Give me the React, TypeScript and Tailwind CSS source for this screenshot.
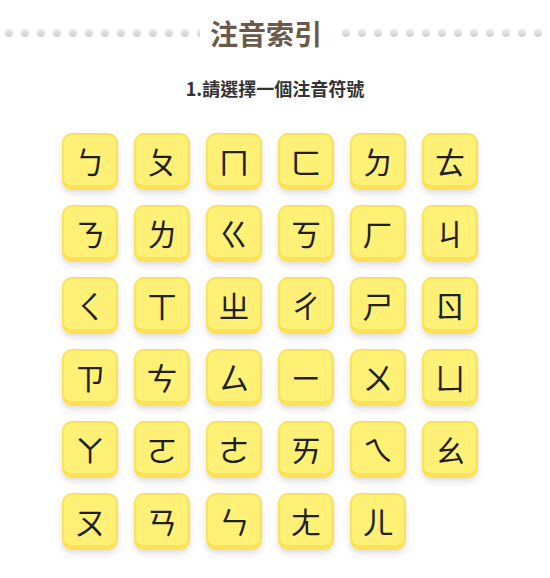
import React from 'react';

const symbols = [
  'ㄅ', 'ㄆ', 'ㄇ', 'ㄈ', 'ㄉ', 'ㄊ',
  'ㄋ', 'ㄌ', 'ㄍ', 'ㄎ', 'ㄏ', 'ㄐ',
  'ㄑ', 'ㄒ', 'ㄓ', 'ㄔ', 'ㄕ', 'ㄖ',
  'ㄗ', 'ㄘ', 'ㄙ', 'ㄧ', 'ㄨ', 'ㄩ',
  'ㄚ', 'ㄛ', 'ㄜ', 'ㄞ', 'ㄟ', 'ㄠ',
  'ㄡ', 'ㄢ', 'ㄣ', 'ㄤ', 'ㄦ',
];

function Dots({ count }: { count: number }) {
  return (
    <div className="flex items-center gap-2 overflow-hidden">
      {Array.from({ length: count }).map((_, i) => (
        <span
          key={i}
          className="shrink-0 w-2 h-2 rounded-full bg-gradient-to-b from-[#eeeceb] to-[#d3cfcc]"
        />
      ))}
    </div>
  );
}

export default function App() {
  return (
    <div className="w-[550px] h-[578px] bg-white font-['Noto_Sans_CJK_TC','Noto_Sans',sans-serif]">
      {/* Title with dotted rules */}
      <div className="flex items-center pt-[15px] pl-[5px]">
        <div className="w-[195px] overflow-hidden">
          <Dots count={13} />
        </div>
        <h1 className="w-[142px] pr-[10px] text-center text-[28px] font-bold leading-[36px] text-[#6b5a4a]">
          注音索引
        </h1>
        <div className="flex-1 overflow-hidden">
          <Dots count={14} />
        </div>
      </div>

      <p className="mt-[24px] text-center text-[18px] font-bold text-[#333333] leading-[26px]">
        1.請選擇一個注音符號
      </p>

      {/* Symbol grid */}
      <div className="mt-[32px] ml-[62px] grid grid-cols-[repeat(6,56px)] gap-x-4 gap-y-[15px]">
        {symbols.map((s) => (
          <button
            key={s}
            className="w-14 h-[57px] rounded-[10px] bg-[#fff176] border-2 border-b-[5px] border-[#fde257] shadow-[0_4px_6px_rgba(0,0,0,0.12)] flex items-center justify-center text-[31px] font-normal text-[#1f1f1f] leading-none"
          >
            {s}
          </button>
        ))}
      </div>
    </div>
  );
}
